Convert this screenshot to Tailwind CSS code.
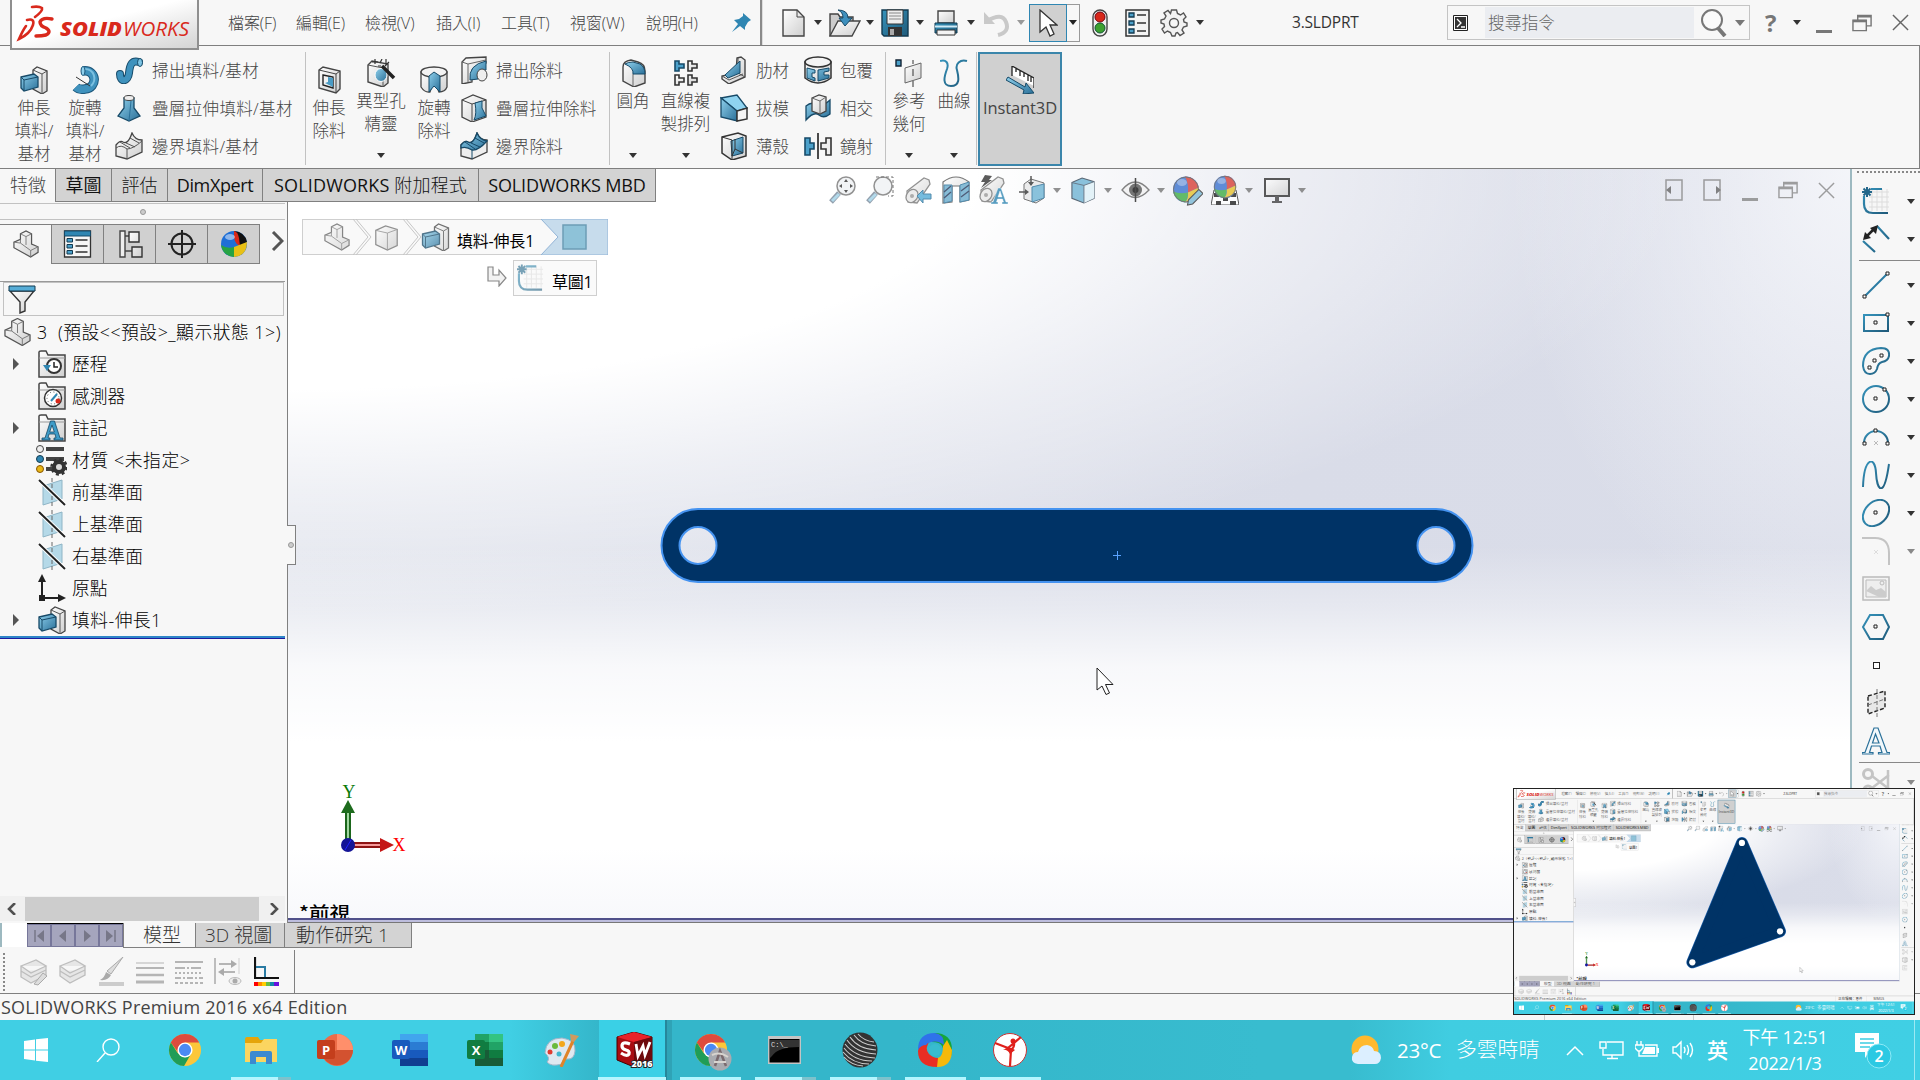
<!DOCTYPE html>
<html lang="zh-Hant">
<head>
<meta charset="utf-8">
<title>SOLIDWORKS</title>
<script src="https://cdn.jsdelivr.net/npm/@tailwindcss/browser@4"></script>
</head>
<body class="h-[1080px] w-[1920px] overflow-hidden">
<svg width="0" height="0" class="absolute">
<defs>
<linearGradient id="gb" x1="0" y1="0" x2="1" y2="1"><stop offset="0" stop-color="#8fd0ec"/><stop offset="1" stop-color="#2a7099"/></linearGradient>
<linearGradient id="gw" x1="0" y1="0" x2="1" y2="1"><stop offset="0" stop-color="#fff"/><stop offset="1" stop-color="#cfcfcf"/></linearGradient>
<linearGradient id="gs" x1="0" y1="0" x2="1" y2="1" ><stop offset="0" stop-color="#3593bb"/><stop offset="1" stop-color="#1f5a7a"/></linearGradient>
<symbol id="extrude" viewBox="0 0 28 28"><path d="M13 4 17 1 27 5V25L22 28 13 23Z" fill="url(#gw)" stroke="#444" stroke-width="1.3"/><path d="M13 4 22 8V28M22 8 27 5" fill="none" stroke="#555"/><path d="M1 11 14 8 18 11V21L4 25 1 22Z" fill="url(#gb)" stroke="#174a68" stroke-width="1.3"/><path d="M1 11 4 14 18 11M4 14V25" fill="none" stroke="#174a68"/></symbol>
<symbol id="revolve" viewBox="0 0 28 28"><path d="M12 5C26 3 27 22 14 23Q8 24 5 21" fill="none" stroke="#1b567a" stroke-width="9.500"/><path d="M12 5C26 3 27 22 14 23Q8 24 5 21" fill="none" stroke="#3f92bd" stroke-width="7.500"/><path d="M12 3C24 2 26 14 20 20" fill="none" stroke="#7cc0e0" stroke-width="2"/><ellipse cx="12" cy="5" rx="2" ry="4.500" fill="#8fd0ec" stroke="#1b567a"/><path d="M5 11 19 20" stroke="#333" stroke-width="1"/></symbol>
<symbol id="sweep" viewBox="0 0 28 28"><path d="M5 18C5 27 13 26 14 17S17 4 24 6" fill="none" stroke="#174a68" stroke-width="8" stroke-linecap="round"/><path d="M5 18C5 27 13 26 14 17S17 4 24 6" fill="none" stroke="#3f92bd" stroke-width="6" stroke-linecap="round"/><ellipse cx="25" cy="6.500" rx="2.500" ry="4" fill="#7cc4e4" stroke="#174a68"/></symbol>
<symbol id="loft" viewBox="0 0 28 28"><path d="M9 4V14L3 22 14 27 25 22 19 14V4Z" fill="url(#gb)" stroke="#174a68" stroke-width="1.300"/><path d="M14 27 16 7" stroke="#2a7099"/><ellipse cx="14" cy="4" rx="5" ry="2.500" fill="#eee" stroke="#444"/></symbol>
<symbol id="bound" viewBox="0 0 28 28"><path d="M1 13Q5 8 8 10Q13 13 17 1Q20 8 27 8V20L12 27 1 24Z" fill="url(#gw)" stroke="#444" stroke-width="1.300"/><path d="M1 16Q6 12 12 17V27M12 17Q18 17 27 9M5 10 15 16M11 11 20 15M15 6 24 11" fill="none" stroke="#555"/></symbol>
<symbol id="boundb" viewBox="0 0 28 28"><path d="M1 13Q5 8 8 10Q13 13 17 1Q20 8 27 8V20L12 27 1 24Z" fill="#eee" stroke="#444" stroke-width="1.300"/><path d="M1 13Q5 8 8 10Q13 13 17 1Q20 8 27 9Q18 19 12 18 6 14 1 16Z" fill="url(#gb)" stroke="#174a68" stroke-width="1.300"/><path d="M12 18V27M5 10 15 17M11 11 20 15M15 6 24 11" fill="none" stroke="#174a68"/></symbol>
<symbol id="excut" viewBox="0 0 28 28"><path d="M4 4 8 1 25 5V23L21 27 4 22Z" fill="url(#gw)" stroke="#444" stroke-width="1.400"/><path d="M4 4 21 8V27M21 8 25 5" fill="none" stroke="#444"/><path d="M8 9 18 11V22L8 19Z" fill="#f2f2f2" stroke="#222" stroke-width="1.400"/><path d="M10 17 13 16V11L18 12V21Z" fill="#4a9bc4"/></symbol>
<symbol id="hole" viewBox="0 0 30 28"><path d="M2 6 6 2 22 5V24L17 28 2 23Z" fill="url(#gw)" stroke="#444" stroke-width="1.400"/><path d="M2 6 17 9V28" fill="none" stroke="#555"/><ellipse cx="15" cy="16" rx="6" ry="6.500" fill="url(#gb)" stroke="#fff"/><path d="M16 7 28 19" stroke="#222" stroke-width="3.500"/><path d="M9 0V5M6 3H12M16 0 14 4M20 0V6M23 3 19 7M12 7H15" stroke="#333" stroke-width="1.200"/></symbol>
<symbol id="revcut" viewBox="0 0 28 28"><path d="M1 6V21Q5 27 10 26L14 14 19 26Q25 26 27 21V6Z" fill="url(#gw)" stroke="#444" stroke-width="1.300"/><ellipse cx="14" cy="6" rx="13" ry="5" fill="#f3f3f3" stroke="#444" stroke-width="1.300"/><path d="M14 6 9 10V26L14 20 20 26V10Z" fill="url(#gb)" stroke="#174a68"/></symbol>
<symbol id="swcut" viewBox="0 0 28 28"><path d="M2 6 6 2 26 1V7L12 14V26L2 28Z" fill="url(#gw)" stroke="#444" stroke-width="1.300"/><path d="M2 6 8 8 26 4M8 8V26" fill="none" stroke="#666"/><path d="M10 24Q8 9 26 5V14Q19 14 18 23Z" fill="url(#gb)" stroke="#174a68"/><ellipse cx="22" cy="19" rx="5" ry="6" fill="#eee" stroke="#444"/></symbol>
<symbol id="lofcut" viewBox="0 0 28 28"><path d="M2 6 13 1 26 6V23L12 28 2 23Z" fill="url(#gw)" stroke="#444" stroke-width="1.300"/><path d="M2 6 12 10V28M12 10 26 6" fill="none" stroke="#444"/><path d="M15 9 22 7V14L26 22 14 26Q17 20 15 9Z" fill="url(#gb)" stroke="#174a68"/></symbol>
<symbol id="fillet" viewBox="0 0 28 28"><path d="M4 8Q4 2 12 1L19 3Q26 5 26 12V24L15 28 4 22Z" fill="url(#gw)" stroke="#444" stroke-width="1.400"/><path d="M14 15V27" fill="none" stroke="#666"/><path d="M6 5Q9 3 14 3L21 5Q26 8 26 15H14Q15 9 6 5Z" fill="url(#gb)" stroke="#174a68"/></symbol>
<symbol id="pattern" viewBox="0 0 28 28"><g fill="url(#gw)" stroke="#333" stroke-width="1.600"><path d="M16 2H20V5H25V9H20V12H16Z"/><path d="M3 16H7V19H12V23H7V26H3ZM16 16H20V19H25V23H20V26H16Z"/></g><path d="M3 2H7V5H12V9H7V12H3Z" fill="#4ba0ca" stroke="#174a68" stroke-width="1.600"/></symbol>
<symbol id="rib" viewBox="0 0 28 28"><path d="M17 2 21 1 25 4V21L9 28 2 23V20L16 17Z" fill="url(#gw)" stroke="#444" stroke-width="1.400"/><path d="M18 2V17L25 21M2 20 9 24 23 18" fill="none" stroke="#555"/><path d="M20 5V17L8 22 5 19Z" fill="url(#gb)" stroke="#174a68"/></symbol>
<symbol id="draft" viewBox="0 0 28 28"><path d="M1 4 17 1 27 14 17 17Z" fill="#8fd3f0" stroke="#174a68" stroke-width="1.300"/><path d="M1 4 17 17V27L1 23Z" fill="url(#gb)" stroke="#174a68" stroke-width="1.300"/><path d="M17 17 27 14V25L17 27Z" fill="#f4f4f4" stroke="#333" stroke-width="1.500"/></symbol>
<symbol id="shell" viewBox="0 0 28 28"><path d="M2 5 18 1 26 4V24L12 28 2 21Z" fill="url(#gw)" stroke="#333" stroke-width="1.500"/><path d="M11 9 23 5V21L12 24Z" fill="url(#gb)" stroke="#174a68"/><path d="M2 5 12 8V28M15 7V17L12 24M15 17 23 21" fill="none" stroke="#333"/></symbol>
<symbol id="wrap" viewBox="0 0 28 28"><path d="M1 6V22Q14 32 27 22V6Z" fill="url(#gw)" stroke="#333" stroke-width="1.500"/><ellipse cx="14" cy="6" rx="13" ry="5" fill="#f4f4f4" stroke="#333" stroke-width="1.500"/><path d="M3 12 11 14V17H8V21L11 22V25L3 22ZM25 12 14 14V25L25 22V19H20V16L25 15Z" fill="url(#gb)" stroke="#174a68"/></symbol>
<symbol id="intersect" viewBox="0 0 28 28"><path d="M2 12Q8 7 12 11T26 6V20Q20 25 15 21T2 26Z" fill="url(#gb)" stroke="#174a68" stroke-width="1.300"/><path d="M8 4 15 1 22 3V17L16 20 8 17Z" fill="url(#gw)" stroke="#444" stroke-width="1.300"/><path d="M8 4 16 7 22 3M16 7V20" fill="none" stroke="#666"/></symbol>
<symbol id="mirror" viewBox="0 0 28 28"><path d="M1 6H6V11H10V17H6V23H1Z" fill="#4ba0ca" stroke="#174a68" stroke-width="1.600"/><path d="M27 6H22V11H17V17H22V23H27Z" fill="#eee" stroke="#333" stroke-width="1.600"/><path d="M14 1V27" stroke="#111" stroke-width="1.500"/></symbol>
<symbol id="refgeo" viewBox="0 0 28 28"><path d="M1 1H6V7H1Z" fill="#4ba0ca" stroke="#123" stroke-width="1.400"/><path d="M10 9 26 4V19L10 24Z" fill="url(#gw)" stroke="#666"/><path d="M18 1V5M18 10V17M18 22V28" stroke="#333"/></symbol>
<symbol id="curve" viewBox="0 0 28 28"><path d="M0 2C6 0 9 4 7 10C4 18 2 27 11 27S19 19 17 11C15 5 20 0 27 2" fill="none" stroke="url(#gs)" stroke-width="2"/></symbol>
<symbol id="instant" viewBox="0 0 28 28"><path d="M6 0 28 12V20L6 9Z" fill="#fff"/><path d="M6 10V0L28 12V22M10 2V6M14 5V10M18 7V11M22 9V15M25 11V16" fill="none" stroke="#222" stroke-width="1.300"/><path d="M2 11 19 21 20 17 28 27 17 28 18 24 0 14Z" fill="url(#gb)" stroke="#174a68"/></symbol>
<symbol id="part" viewBox="0 0 28 28"><path d="M8 3 14 0 20 3V14L27 17V23L19 28 1 18V12L8 9Z" fill="url(#gw)" stroke="#555" stroke-width="1.300"/><path d="M8 3 14 6 20 3M14 6V15M8 9V13L19 21 27 17M19 21V28M1 12 8 13" fill="none" stroke="#777"/></symbol>
<symbol id="cube" viewBox="0 0 28 28"><path d="M2 6 13 1 26 5V23L15 28 2 22Z" fill="url(#gw)" stroke="#777" stroke-width="1.400"/><path d="M2 6 15 9 26 5M15 9V28" fill="none" stroke="#888"/></symbol>
<symbol id="sketch" viewBox="0 0 28 28"><path d="M7 5H27M7 10H27M7 15H27M7 20H27M10 2V24M15 2V24M20 2V24M25 2V24" stroke="#ddd"/><path d="M9 2H20M2 9V17Q2 26 11 26H26" fill="none" stroke="url(#gs)" stroke-width="2.200"/><path d="M5 0V10M0 5H10M1.500 1.500 8.500 8.500M8.500 1.500 1.500 8.500" stroke="#23678a" stroke-width="2"/></symbol>
<symbol id="folder" viewBox="0 0 28 28"><path d="M1 27V2Q1 1 3 1H8L10 5H27V27Z" fill="url(#gw)" stroke="#444" stroke-width="1.500"/><path d="M1 8H27" stroke="#999"/></symbol>
<symbol id="plane" viewBox="0 0 28 28"><path d="M5 8 24 2V21L5 27Z" fill="#b5d9e8" stroke="#8fb5c6"/><path d="M14 0V28" stroke="#666" stroke-dasharray="4 2"/><path d="M1 2 27 27" stroke="#fff" stroke-width="4"/><path d="M1 2 27 27" stroke="#222" stroke-width="2"/></symbol>
<symbol id="mag" viewBox="0 0 28 28"><path d="M2 26 10 17" stroke="#789" stroke-width="5"/><path d="M3 25 10 18" stroke="#9fd0e6" stroke-width="3"/><circle cx="17" cy="10" r="9" fill="#f0f2f4" stroke="#777" stroke-width="1.500"/></symbol>
<symbol id="scope" viewBox="0 0 28 28"><path d="M3 15 20 2 25 4 26 8 13 27 4 26Z" fill="url(#gw)" stroke="#777" stroke-width="1.300"/><ellipse cx="8" cy="20" rx="5.500" ry="7" transform="rotate(35 8 20)" fill="#e8e8e8" stroke="#777" stroke-width="1.300"/><circle cx="8" cy="20" r="2" fill="#999"/></symbol>
<symbol id="ball" viewBox="0 0 28 28"><circle cx="14" cy="14" r="13" fill="#3b73d0"/><path d="M13 1Q24 1 27 12L16 17Q17 8 13 1Z" fill="#d84038"/><path d="M1 16Q8 19 16 17Q16 24 13 27 3 25 1 16Z" fill="#3fae45"/><path d="M16 17 27 12Q28 24 13 27Q17 23 16 17Z" fill="#e8c22e"/><circle cx="14" cy="14" r="12.500" fill="none" stroke="#555"/><ellipse cx="10" cy="7" rx="5" ry="3.500" fill="#fff" opacity=".35"/></symbol>
<symbol id="restore" viewBox="0 0 22 18"><path d="M6 6V1H20V12H15" fill="none" stroke="currentColor" stroke-width="1.500"/><path d="M6 2H20" stroke="currentColor" stroke-width="2.500"/><path d="M1 6H15V17H1Z" fill="none" stroke="currentColor" stroke-width="1.500"/><path d="M1 7H15" stroke="currentColor" stroke-width="2.500"/></symbol>
<symbol id="close" viewBox="0 0 18 18"><path d="M1 1 17 17M17 1 1 17" stroke="currentColor" stroke-width="1.500"/></symbol>
<symbol id="chrome" viewBox="0 0 36 36"><circle cx="18" cy="18" r="17" fill="#fbc73a"/><path d="M3 10A17 17 0 0 1 33 10L18 10 11 21Z" fill="#dd4b3e"/><path d="M3 10A17 17 0 0 0 17 35L25 21 18 26 10 21Z" fill="#1f9d57"/><circle cx="18" cy="18" r="8" fill="#fff"/><circle cx="18" cy="18" r="6.500" fill="#4a8af4"/></symbol>
</defs></svg>

<div id="stage" class="relative h-[1080px] w-[1920px] overflow-hidden bg-[#f7f7f7]">
<div id="screen" class="flex h-[1080px] w-[1920px] flex-col overflow-hidden bg-[#f7f7f7] font-['Open_Sans','Noto_Sans_CJK_TC',sans-serif] text-[16.500px] text-[#444]">

<!-- title bar -->
<header class="relative flex h-[46px] shrink-0 items-center border-b border-[#7f7f7f]">
  <div class="absolute top-0 left-[10px] z-10 h-[50px] w-[189px] border-2 border-t-0 border-[#8f8f8f] bg-gradient-to-br from-white from-45% to-[#d4d4d4]">
    <svg class="h-[48px] w-[185px]" viewBox="12 0 185 48"><g fill="none" stroke="#d9291c" stroke-linecap="round"><path d="M32 7Q39 6 42 8Q43 11 35 17" stroke-width="2.600"/><path d="M27 20Q35 18 33 25Q30 34 19 39Q23 30 26 26" stroke-width="2.600"/><path d="M52 19Q42 17 40 22Q40 26 46 28Q52 32 46 35 42 36 36 36" stroke-width="3.400"/></g><text x="60" y="36" font-family="'Open Sans'" font-style="italic" font-size="19.500" font-weight="800" fill="#d9291c" textLength="62" lengthAdjust="spacingAndGlyphs">SOLID</text><text x="123" y="36" font-family="'Open Sans'" font-style="italic" font-size="19.500" fill="#d9291c" textLength="66" lengthAdjust="spacingAndGlyphs">WORKS</text></svg>
  </div>
  <nav class="mt-px ml-[228px] flex text-[16px] font-light tracking-[-0.100px] whitespace-nowrap">
    <span class="w-[68px]">檔案(F)</span><span class="w-[69px]">編輯(E)</span><span class="w-[71px]">檢視(V)</span><span class="w-[65px]">插入(I)</span><span class="w-[69px]">工具(T)</span><span class="w-[76px]">視窗(W)</span><span class="w-[85px]">說明(H)</span>
  </nav>
  <svg class="h-5 w-5" viewBox="0 0 20 20"><path d="M12 0 20 7 17 9 14 14V17L9 13 1 19 7 11 3 7 8 6 12 3Z" fill="#2f86b2"/></svg>
  <div class="ml-[9px] h-[45px] w-[3px] border-l-2 border-[#8a8a8a] bg-[#ddd]"></div>
  <div class="flex items-center">
    <div class="ml-[19px] flex w-[47px] items-center gap-[9px]"><svg class="h-7 w-[23px]" viewBox="0 0 23 28"><path d="M1 1H15L22 8V27H1Z" fill="url(#gw)" stroke="#444" stroke-width="1.400"/><path d="M15 1V8H22" fill="none" stroke="#444"/></svg><i class="block border-x-4 border-t-[5px] border-x-transparent border-t-[#333]"></i></div>
    <div class="flex w-[52px] items-center gap-[5px]"><svg class="h-7 w-[32px]" viewBox="0 0 32 28"><path d="M1 27V5H9L11 8H24V13" fill="#ccc" stroke="#444" stroke-width="1.400"/><path d="M1 27 9 12H31L23 27Z" fill="url(#gw)" stroke="#444" stroke-width="1.400"/><path d="M9 1Q19 1 19 9H23L16 17 10 9H14Q14 3 9 1Z" fill="#3d8fbd" stroke="#174a68"/></svg><i class="block border-x-4 border-t-[5px] border-x-transparent border-t-[#333]"></i></div>
    <div class="flex w-[53px] items-center gap-[7px]"><svg class="h-7 w-7" viewBox="0 0 28 28"><path d="M1 1H27V27H3L1 25Z" fill="url(#gs)" stroke="#123a50" stroke-width="1.400"/><path d="M6 1H22V15H6Z" fill="#eee" stroke="#333"/><path d="M8 4H20M8 7H20M8 10H20" stroke="#888"/><path d="M7 18H21V27H7Z" fill="#333"/><path d="M9 20H13V26H9Z" fill="#aaa"/></svg><i class="block border-x-4 border-t-[5px] border-x-transparent border-t-[#333]"></i></div>
    <div class="flex w-[49px] items-center gap-[9px]"><svg class="h-7 w-[24px]" viewBox="0 0 24 28"><path d="M4 2H20V14H4Z" fill="url(#gw)" stroke="#444" stroke-width="1.400"/><path d="M1 14H23V24H1Z" fill="url(#gs)" stroke="#123a50"/><path d="M1 17.500H23" stroke="#cfeaf6" stroke-width="2"/><path d="M3 21H21V26H3Z" fill="#f3f3f3" stroke="#333"/></svg><i class="block border-x-4 border-t-[5px] border-x-transparent border-t-[#333]"></i></div>
    <div class="flex w-[44px] items-center gap-[8px]"><svg class="h-7 w-[26px]" viewBox="0 0 26 28"><path d="M4 12Q19 3 23 13T15 26" fill="none" stroke="#c9c9c9" stroke-width="4"/><path d="M1 3V15H12Z" fill="#c9c9c9"/></svg><i class="block border-x-4 border-t-[5px] border-x-transparent border-t-[#999]"></i></div>
    <div class="ml-[2px] flex h-[38px] w-[51px] items-center border border-[#999]"><div class="-ml-px grid h-[38px] w-[38px] place-items-center border border-[#2f86b2] bg-[#d0d0d0]"><svg class="h-7 w-5" viewBox="0 0 20 28"><path d="M2 1V23L8 18 12 27 16 25 12 16H19Z" fill="#fff" stroke="#333" stroke-width="1.300"/></svg></div><i class="ml-[2px] block border-x-4 border-t-[5px] border-x-transparent border-t-[#222]"></i></div>
    <svg class="ml-[12px] h-7 w-[16px]" viewBox="0 0 16 28"><rect x="1" y="1" width="14" height="26" rx="7" fill="#eee" stroke="#444" stroke-width="1.400"/><circle cx="8" cy="8" r="5" fill="#d8281a" stroke="#701"/><circle cx="8" cy="19" r="5" fill="#3da12f" stroke="#153"/></svg>
    <svg class="ml-[17px] h-7 w-[25px]" viewBox="0 0 25 28"><path d="M1 1H24V27H1Z" fill="#f4f4f4" stroke="#333" stroke-width="1.500"/><g fill="#4ba0ca" stroke="#123a50" stroke-width="1.300"><path d="M4 4H9V8H4ZM4 12H9V16H4ZM4 20H9V24H4Z"/></g><path d="M12 6H21M12 14H21M12 22H21" stroke="#333" stroke-width="1.400"/></svg>
    <svg class="ml-[10px] h-[28px] w-[28px]" viewBox="-14 -14 28 28"><path d="M-2.500-13H2.500L3.500-9.500 6.500-8 9.500-10 12-6 9.500-3.500 10-1 13 0V3L9.500 4 8 7 10 10 6 12.500 3.500 9.500 2 10 1 13H-2L-3.500 9.500-6.500 8-9.500 10-12 6-9.500 3.500-10 1-13 0V-3L-9.500-4-8-7-10-10-6-12.500-3.500-9.500Z" fill="#f2f2f2" stroke="#555" stroke-width="1.400"/><circle r="4.500" fill="#f7f7f7" stroke="#555" stroke-width="1.400"/></svg>
    <i class="ml-[8px] block border-x-4 border-t-[5px] border-x-transparent border-t-[#333]"></i>
  </div>
  <span data-title class="mt-px ml-[88px] w-[155px] text-[15.500px] tracking-[-0.200px] text-[#333]">3.SLDPRT</span>
  <div class="flex h-[35px] w-[303px] items-center border border-[#c4c4c4]">
    <svg class="ml-[5px] h-4 w-[15px]" viewBox="0 0 15 16"><path d="M.5.500H14.500V15.500H.5Z" fill="#fff" stroke="#222"/><path d="M2 2H13V14H2Z" fill="#333"/><path d="M4 4 8 8 4 12M8 12H12" fill="none" stroke="#fff" stroke-width="1.300"/></svg>
    <div class="ml-[17px] flex h-[31px] w-[209px] items-center bg-[#ebedf1] pl-[3px] text-[16.800px] font-light text-[#666]">搜尋指令</div>
    <svg class="ml-[6px] h-7 w-7" viewBox="0 0 28 28"><circle cx="12" cy="11" r="10" fill="#fafafa" stroke="#777" stroke-width="2"/><path d="M18 19 25 27" stroke="#777" stroke-width="4"/></svg>
    <i class="ml-[7px] block border-x-[5px] border-t-[6px] border-x-transparent border-t-[#777]"></i>
  </div>
  <b class="ml-[15px] w-[14px] text-[24px] text-[#777]">?</b><i class="ml-[14px] block border-x-4 border-t-[5px] border-x-transparent border-t-[#333]"></i>
  <div class="mt-[18px] ml-[15px] h-[3px] w-[16px] bg-[#777]"></div>
  <svg class="ml-[20px] h-[18px] w-[21px] text-[#777]"><use href="#restore"/></svg>
  <svg class="ml-[19px] h-[17px] w-[17px] text-[#666]"><use href="#close"/></svg>
</header>

<!-- ribbon -->
<section class="flex h-[123px] shrink-0 border-r border-b border-[#7f7f7f] text-center leading-[23px] font-light">
  <div class="ml-[9px] flex w-[50px] flex-col items-center pt-[20px]"><svg class="h-7 w-7"><use href="#extrude"/></svg><p class="mt-[2px]">伸長<br>填料/<br>基材</p></div>
  <div class="ml-px flex w-[50px] flex-col items-center pt-[20px]"><svg class="h-7 w-7"><use href="#revolve"/></svg><p class="mt-[2px]">旋轉<br>填料/<br>基材</p></div>
  <div class="ml-[5px] w-[190px] pt-[5px] tracking-[0.350px] whitespace-nowrap">
    <div class="flex h-[38px] items-center gap-[9px]"><svg class="h-7 w-7"><use href="#sweep"/></svg>掃出填料/基材</div>
    <div class="flex h-[38px] items-center gap-[9px]"><svg class="h-7 w-7"><use href="#loft"/></svg>疊層拉伸填料/基材</div>
    <div class="flex h-[38px] items-center gap-[9px]"><svg class="h-7 w-7"><use href="#bound"/></svg>邊界填料/基材</div>
  </div>
  <div class="mt-[6px] h-[113px] w-px bg-[#c2c2c2]"></div>
  <div class="flex w-[46px] flex-col items-center pt-[20px]"><svg class="h-7 w-7"><use href="#excut"/></svg><p class="mt-[2px]">伸長<br>除料</p></div>
  <div class="flex w-[58px] flex-col items-center pt-[13px]"><svg class="h-7 w-[30px]"><use href="#hole"/></svg><p class="mt-[2px]">異型孔<br>精靈</p><i class="mt-[18px] block border-x-4 border-t-[5px] border-x-transparent border-t-[#333]"></i></div>
  <div class="flex w-[48px] flex-col items-center pt-[20px]"><svg class="h-7 w-7"><use href="#revcut"/></svg><p class="mt-[2px]">旋轉<br>除料</p></div>
  <div class="ml-[2px] w-[149px] pt-[5px] tracking-[0.250px] whitespace-nowrap">
    <div class="flex h-[38px] items-center gap-[8px]"><svg class="h-7 w-7"><use href="#swcut"/></svg>掃出除料</div>
    <div class="flex h-[38px] items-center gap-[8px]"><svg class="h-7 w-7"><use href="#lofcut"/></svg>疊層拉伸除料</div>
    <div class="flex h-[38px] items-center gap-[8px]"><svg class="h-7 w-7"><use href="#boundb"/></svg>邊界除料</div>
  </div>
  <div class="mt-[6px] h-[113px] w-px bg-[#c2c2c2]"></div>
  <div class="flex w-[46px] flex-col items-center pt-[13px]"><svg class="h-7 w-7"><use href="#fillet"/></svg><p class="mt-[2px]">圓角</p><i class="mt-[41px] block border-x-4 border-t-[5px] border-x-transparent border-t-[#333]"></i></div>
  <div class="flex w-[59px] flex-col items-center pt-[13px]"><svg class="h-7 w-7"><use href="#pattern"/></svg><p class="mt-[2px]">直線複<br>製排列</p><i class="mt-[18px] block border-x-4 border-t-[5px] border-x-transparent border-t-[#333]"></i></div>
  <div class="ml-[5px] w-[84px] pt-[5px] whitespace-nowrap">
    <div class="flex h-[38px] items-center gap-[8px]"><svg class="h-7 w-7"><use href="#rib"/></svg>肋材</div>
    <div class="flex h-[38px] items-center gap-[8px]"><svg class="h-7 w-7"><use href="#draft"/></svg>拔模</div>
    <div class="flex h-[38px] items-center gap-[8px]"><svg class="h-7 w-7"><use href="#shell"/></svg>薄殼</div>
  </div>
  <div class="w-[81px] pt-[5px] whitespace-nowrap">
    <div class="flex h-[38px] items-center gap-[8px]"><svg class="h-7 w-7"><use href="#wrap"/></svg>包覆</div>
    <div class="flex h-[38px] items-center gap-[8px]"><svg class="h-7 w-7"><use href="#intersect"/></svg>相交</div>
    <div class="flex h-[38px] items-center gap-[8px]"><svg class="h-7 w-7"><use href="#mirror"/></svg>鏡射</div>
  </div>
  <div class="mt-[6px] h-[113px] w-px bg-[#c2c2c2]"></div>
  <div class="flex w-[46px] flex-col items-center pt-[13px]"><svg class="h-7 w-7"><use href="#refgeo"/></svg><p class="mt-[2px]">參考<br>幾何</p><i class="mt-[18px] block border-x-4 border-t-[5px] border-x-transparent border-t-[#333]"></i></div>
  <div class="flex w-[44px] flex-col items-center pt-[13px]"><svg class="h-7 w-7"><use href="#curve"/></svg><p class="mt-[2px]">曲線</p><i class="mt-[41px] block border-x-4 border-t-[5px] border-x-transparent border-t-[#333]"></i></div>
  <div class="mt-[6px] h-[113px] w-px bg-[#c2c2c2]"></div>
  <div class="mt-[6px] ml-px flex h-[114px] w-[84px] flex-col items-center border-2 border-[#3b86ab] bg-[#d0d0d0] pt-[12px]"><svg class="h-7 w-7"><use href="#instant"/></svg><p class="mt-[2px] font-normal tracking-[-0.100px]">Instant3D</p></div>
</section>

<main class="relative flex h-[754px] shrink-0">
  <!-- command manager tabs -->
  <div class="absolute top-0 left-0 z-10 flex h-[33px] w-[656px] text-[18px] leading-[33px] text-[#111]">
    <span class="w-[55px] pl-[10px] font-light text-[#444]">特徵</span>
    <span class="w-[57px] border border-t-0 border-[#808080] bg-[#d3d3d3] text-center">草圖</span>
    <span class="w-[56px] border-r border-b border-[#808080] bg-[#d3d3d3] text-center font-light">評估</span>
    <span class="w-[95px] border-r border-b border-[#808080] bg-[#d3d3d3] text-center tracking-[-0.400px]">DimXpert</span>
    <span class="w-[216px] border-r border-b border-[#808080] bg-[#d3d3d3] text-center tracking-[0.150px] whitespace-nowrap">SOLIDWORKS <span class="font-light">附加程式</span></span>
    <span class="w-[177px] border-r border-b border-[#808080] bg-[#d3d3d3] text-center tracking-[-0.150px] whitespace-nowrap">SOLIDWORKS MBD</span>
  </div>

  <!-- feature tree panel -->
  <aside class="relative flex w-[288px] flex-col border-r border-[#808080] pt-[34px]">
    <div class="mr-[2px] grid h-[17px] place-items-center border-y border-[#c2c2c2]"><div class="h-[6px] w-[6px] rounded-full border border-[#999] bg-[#ccc]"></div></div>
    <div class="mt-[4px] flex h-[40px] w-[285px]">
      <div class="w-[51px] border-t border-[#808080] pt-[5px] pl-[13px]"><svg class="h-7 w-[26px]"><use href="#part"/></svg></div>
      <div class="grid w-[53px] place-items-center border border-[#808080] bg-[#d0d0d0]"><svg class="h-7 w-[29px]" viewBox="0 0 28 28"><path d="M1 1H27V27H1Z" fill="#f6f6f6" stroke="#333" stroke-width="1.300"/><path d="M1 1H27V6H1Z" fill="#2f86b2" stroke="#174a68"/><g fill="#4ba0ca" stroke="#123a50"><path d="M3.500 8.500H9V12H3.500ZM3.500 14.500H9V18H3.500ZM3.500 20.500H9V24H3.500Z"/></g><path d="M12 10H24M12 16H24M12 22H24" stroke="#333" stroke-width="1.300"/></svg></div>
      <div class="grid w-[52px] place-items-center border border-l-0 border-[#808080] bg-[#d0d0d0]"><svg class="h-7 w-7" viewBox="0 0 28 28"><path d="M4 1H9V27H4ZM9 6H15M9 21H17" fill="#eee" stroke="#444" stroke-width="1.400"/><path d="M13 2H23V12H13ZM16 17H26V27H16Z" fill="url(#gw)" stroke="#333" stroke-width="1.400"/></svg></div>
      <div class="grid w-[52px] place-items-center border border-l-0 border-[#808080] bg-[#d0d0d0]"><svg class="h-7 w-7" viewBox="0 0 28 28"><g stroke="#222" stroke-width="2" fill="none"><circle cx="14" cy="14" r="10.500"/><path d="M14 0V28M0 14H28"/></g></svg></div>
      <div class="grid w-[52px] place-items-center border border-l-0 border-[#808080] bg-[#d0d0d0]"><svg class="h-7 w-7" viewBox="0 0 28 28"><circle cx="14" cy="14" r="13" fill="#1f6fd6"/><path d="M14 1Q25 2 27 12L20 16Q13 10 14 1Z" fill="#111"/><path d="M14 1Q18 2 19 8L20 16Q13 14 14 1Z" fill="#d8281a"/><path d="M1 15Q7 19 14 17V27Q3 26 1 15Z" fill="#27a343"/><path d="M14 17 27 12Q27 26 14 27Z" fill="#e8c016"/><ellipse cx="10" cy="7" rx="5" ry="3" fill="#fff" opacity=".5"/></svg></div>
      <svg class="mt-[7px] ml-[11px] h-[20px] w-[13px] shrink-0" viewBox="0 0 13 20"><path d="M2 1 11 10 2 19" fill="none" stroke="#555" stroke-width="3"/></svg>
    </div>
    <div class="mt-[17px] mr-[2px] border-t border-[#999]"></div>
    <div class="mr-[3px] ml-[3px] h-[34px] border border-[#c2c2c2] pt-[2px] pl-[4px]"><svg class="h-[29px] w-[28px]" viewBox="0 0 28 29"><path d="M2 6H26L17 17V26L12 28V17Z" fill="url(#gw)" stroke="#333" stroke-width="1.400"/><path d="M1 1H27V6H1Z" fill="#55acd6" stroke="#123a50"/></svg></div>
    <div class="flex flex-col text-[17.800px] leading-[32px] font-light text-black whitespace-nowrap">
      <div class="flex h-[32px] w-[285px] items-center overflow-hidden pl-[4px]"><svg class="h-7 w-[27px] shrink-0"><use href="#part"/></svg><span data-root class="ml-[6px] tracking-[0.500px] whitespace-pre">3  (預設&lt;&lt;預設&gt;_顯示狀態 1&gt;)</span></div>
      <div class="flex h-[32px] items-center"><i class="ml-[13px] block border-y-[6px] border-l-[6px] border-y-transparent border-l-[#555]"></i><svg class="mr-[6px] ml-[19px] h-7 w-7" viewBox="0 0 28 28"><use href="#folder"/><circle cx="16" cy="16" r="7" fill="#fff" stroke="#333" stroke-width="2"/><path d="M16 12V17H20" fill="none" stroke="#222" stroke-width="1.500"/><path d="M5 15H13L9 21Z" fill="#2f86b2"/></svg>歷程</div>
      <div class="flex h-[32px] items-center"><svg class="mr-[6px] ml-[38px] h-7 w-7" viewBox="0 0 28 28"><use href="#folder"/><circle cx="15" cy="16" r="8.500" fill="#fff" stroke="#333" stroke-width="1.500"/><circle cx="15" cy="16" r="6" fill="none" stroke="#555" stroke-dasharray="1 2.500"/><path d="M13 19 19 12" stroke="#2f86b2" stroke-width="2"/><circle cx="20" cy="19" r="2.500" fill="#d8281a"/></svg>感測器</div>
      <div class="flex h-[32px] items-center"><i class="ml-[13px] block border-y-[6px] border-l-[6px] border-y-transparent border-l-[#555]"></i><svg class="mr-[6px] ml-[19px] h-7 w-7" viewBox="0 0 28 28"><use href="#folder"/><path d="M4 24H7L12.500 7H16.500L22 24H25V26H16V24H18L17 20H11L10 24H12V26H4ZM11.700 18H16.300L14 11Z" fill="#3f9cc8" stroke="#174a68" stroke-width=".8"/></svg>註記</div>
      <div class="flex h-[32px] items-center"><svg class="mr-[5px] ml-[36px] h-[31px] w-[31px]" viewBox="0 0 31 31"><path d="M10 4H28M10 14H28M10 24H18" stroke="#444" stroke-width="4"/><circle cx="4" cy="4" r="3.500" fill="#eee" stroke="#444"/><circle cx="4" cy="14" r="3.500" fill="#2f86b2" stroke="#123a50"/><circle cx="4" cy="24" r="3.500" fill="#e8b716" stroke="#850"/><circle cx="23" cy="22" r="5" fill="#ddd" stroke="#333" stroke-width="4"/><circle cx="23" cy="22" r="7.500" fill="none" stroke="#333" stroke-width="2.500" stroke-dasharray="3 2.900"/></svg><span class="tracking-[0.600px]">材質 &lt;未指定&gt;</span></div>
      <div class="flex h-[32px] items-center"><svg class="mr-[6px] ml-[38px] h-[30px] w-7"><use href="#plane"/></svg>前基準面</div>
      <div class="flex h-[32px] items-center"><svg class="mr-[6px] ml-[38px] h-[30px] w-7"><use href="#plane"/></svg>上基準面</div>
      <div class="flex h-[32px] items-center"><svg class="mr-[6px] ml-[38px] h-[30px] w-7"><use href="#plane"/></svg>右基準面</div>
      <div class="flex h-[32px] items-center"><svg class="mr-[6px] ml-[38px] h-7 w-7" viewBox="0 0 28 28"><path d="M4 4V24H22" fill="none" stroke="#222" stroke-width="2"/><path d="M0 8 4 0 8 8ZM20 20 28 24 20 28ZM1 21H7V27H1Z" fill="#222"/></svg>原點</div>
      <div class="flex h-[32px] items-center"><i class="ml-[13px] block border-y-[6px] border-l-[6px] border-y-transparent border-l-[#555]"></i><svg class="mr-[6px] ml-[19px] h-7 w-7"><use href="#extrude"/></svg><span class="tracking-[0.450px]">填料-伸長1</span></div>
      <div class="h-[3px] w-[285px] border-b border-[#1c1ca0] bg-[#2f86c8]"></div>
    </div>
    <div class="mt-auto mb-[2px] flex h-[25px] w-[285px] items-center bg-[#f0f0f0]">
      <svg class="ml-[7px] h-3 w-[9px]" viewBox="0 0 9 12"><path d="M8 0 2 6 8 12" fill="none" stroke="#505050" stroke-width="2.600"/></svg>
      <div class="ml-[9px] h-[24px] w-[234px] bg-[#cdcdcd]"></div>
      <svg class="ml-[11px] h-3 w-[9px]" viewBox="0 0 9 12"><path d="M1 0 7 6 1 12" fill="none" stroke="#505050" stroke-width="2.600"/></svg>
    </div>
    <div class="absolute top-[356px] left-[287px] z-10 grid h-[40px] w-[9px] place-items-center border border-l-0 border-[#808080] bg-[#f7f7f7]"><div class="h-[6px] w-[6px] rounded-full border border-[#999] bg-[#ccc]"></div></div>
  </aside>

  <!-- graphics area -->
  <section class="relative h-[754px] w-[1562px] overflow-hidden bg-[linear-gradient(180deg,transparent_50%,rgba(255,255,255,.35)_58%,rgba(255,255,255,.8)_66%,white_76%,white_90%,#f7f8fb_100%),radial-gradient(ellipse_1250px_400px_at_0_0,white_55%,rgba(255,255,255,.5)_80%,transparent_112%),radial-gradient(ellipse_340px_480px_at_100%_0,rgba(248,249,252,.85)_0%,transparent_100%),linear-gradient(90deg,#e0e3ec,#d9dce8_65%,#dadde9)]">
    <svg class="absolute inset-0 h-[754px] w-[1562px]" viewBox="288 169 1562 754">
      <g data-slot><path fill-rule="evenodd" d="M698 509H1436A36.500 36.500 0 0 1 1436 582H698A36.500 36.500 0 0 1 698 509ZM698 527A18.500 18.500 0 1 0 698 564A18.500 18.500 0 1 0 698 527ZM1436 527A18.500 18.500 0 1 0 1436 564A18.500 18.500 0 1 0 1436 527Z" fill="#003366" stroke="#4593f0" stroke-width="2"/><path d="M1113 555.500H1121M1117.500 551V560" stroke="#5aa2ff"/></g>
      <g data-tri class="hidden"><path d="M1094 259 1277 683 856 832Z" fill="#003366" stroke="#1f62ad" stroke-width="57" stroke-linejoin="round"/><path d="M1094 259 1277 683 856 832Z" fill="#003366" stroke="#003366" stroke-width="51" stroke-linejoin="round"/><circle cx="1094" cy="259" r="15" fill="#fff"/><circle cx="1277" cy="683" r="15" fill="#fff"/><circle cx="856" cy="832" r="15" fill="#fff"/></g>
      <g data-cursor><path d="M1097 668V690L1102 686 1106 694.500 1109.500 693 1105.500 684.500H1113Z" fill="#fff" stroke="#222"/></g>
      <path d="M348 840V812" stroke="#1b661b" stroke-width="6"/><path d="M348 840V812" stroke="#9fd69f" stroke-width="2"/><path d="M341 813 348 800 355 813Z" fill="#1d6b1d"/>
      <path d="M354 845H381" stroke="#8f1414" stroke-width="6"/><path d="M354 845H381" stroke="#f59a9a" stroke-width="2"/><path d="M380 838 394 845 380 852Z" fill="#c41616"/>
      <circle cx="348" cy="845" r="7" fill="#141496"/><path d="M345 850 351 840" stroke="#22f"/>
      <text x="349" y="798" text-anchor="middle" font-family="'Liberation Serif'" font-size="18" fill="#087a08">Y</text><text x="399" y="851" text-anchor="middle" font-family="'Liberation Serif'" font-size="18" fill="#f00">X</text>
      <text x="299" y="919" font-family="'Noto Sans CJK TC'" font-weight="500" font-size="17.500" textLength="51" lengthAdjust="spacingAndGlyphs" fill="#000">*前視</text>
    </svg>
    <div class="absolute inset-x-0 bottom-0 h-[5px] border-t-2 border-b border-t-[#50508a] border-b-[#777] bg-[#bdbddd]"></div>

    <div class="relative flex h-[42px] items-center pl-[541px] opacity-80">
      <div class="w-[37px]"><svg class="h-7 w-7" viewBox="0 0 28 28"><use href="#mag"/><path d="M17 3 19 6H15ZM17 17 19 14H15ZM10 10 13 8V12ZM24 10 21 8V12Z" fill="#333"/></svg></div>
      <div class="w-[38px]"><svg class="h-7 w-7" viewBox="0 0 28 28"><use href="#mag"/><path d="M10 1H27V20H22" fill="none" stroke="#555" stroke-dasharray="3 2"/></svg></div>
      <div class="w-[38px]"><svg class="h-7 w-7" viewBox="0 0 28 28"><use href="#scope"/><path d="M13 20 19 14V18H27V23H19V27Z" fill="#55acd6" stroke="#2a7099"/></svg></div>
      <div class="w-[36px]"><svg class="h-7 w-7" viewBox="0 0 28 28"><path d="M1 6Q14-4 27 6V24L18 26V10H10V26L1 27Z" fill="url(#gw)" stroke="#555" stroke-width="1.200"/><path d="M2 9H10V25L2 27ZM18 9 27 6V24L18 26Z" fill="#6aaccd" stroke="#2a7099"/><path d="M2 16 9 10M2 22 9 16M19 15 27 9M19 21 27 15" stroke="#235" stroke-width="1.300"/></svg></div>
      <div class="w-[41px]"><svg class="h-[30px] w-[30px]" viewBox="0 0 30 30"><use href="#scope" width="28" height="28"/><path d="M7 0 14 1 11 5H14L3 13 7 7H3Z" fill="#333"/><path d="M13 27H15L20 13H23L28 27H30V29H24V27H25.500L24.500 24H19.500L18.500 27H20V29H13ZM20 22H24L22 16Z" fill="#2f86b2" stroke="#fff" stroke-width=".4"/></svg></div>
      <div class="flex w-[52px] items-center gap-[8px]"><svg class="h-7 w-[26px]" viewBox="0 0 26 28"><path d="M5 8 12 3 25 7V22L17 27 5 23Z" fill="#e8e8e8" stroke="#555"/><path d="M13 11 25 8V22L13 26Z" fill="#6fb4d4" stroke="#2a7099"/><path d="M12 0V9M0 16H8" stroke="#333" stroke-width="1.500"/><path d="M9 6 12 10 15 6ZM6 13 10 16 6 19Z" fill="#333"/></svg><i class="block border-x-4 border-t-[5px] border-x-transparent border-t-[#777]"></i></div>
      <div class="flex w-[50px] items-center gap-[9px]"><svg class="h-7 w-[24px]" viewBox="0 0 26 28"><path d="M1 6 12 1 25 5V23L14 28 1 23Z" fill="#6fb4d4" stroke="#345" stroke-width="1.200"/><path d="M14 9 25 5V23L14 28Z" fill="#dff1f8"/><path d="M1 6 14 9 25 5M14 9V28" fill="none" stroke="#456"/></svg><i class="block border-x-4 border-t-[5px] border-x-transparent border-t-[#777]"></i></div>
      <div class="flex w-[51px] items-center gap-[7px]"><svg class="h-7 w-[29px]" viewBox="0 0 29 28"><path d="M1 14Q14-2 28 14Q14 29 1 14Z" fill="#f2f2f2" stroke="#666" stroke-width="1.300"/><circle cx="14.500" cy="14" r="6.500" fill="#555"/><circle cx="14.500" cy="14" r="3" fill="#111"/><path d="M14.500 2V26" stroke="#222" stroke-width="1.500"/></svg><i class="block border-x-4 border-t-[5px] border-x-transparent border-t-[#777]"></i></div>
      <div class="w-[39px]"><svg class="h-[31px] w-[31px]" viewBox="0 0 30 30"><use href="#ball" width="27" height="28"/><path d="M15 29 16 24 26 14 30 18 20 28Z" fill="#7bb9d6" stroke="#333"/></svg></div>
      <div class="flex w-[53px] items-center gap-[6px]"><svg class="h-[30px] w-7" viewBox="0 0 28 30"><path d="M3 15H25L28 30H0Z" fill="#fff" stroke="#333"/><path d="M3 18H8V22H3ZM12 22H17V26H12ZM20 18H25V22H20ZM5 26H10V30H5ZM19 26H25V30H19Z" fill="#222"/><use href="#ball" x="2" width="24" height="24"/></svg><i class="block border-x-4 border-t-[5px] border-x-transparent border-t-[#777]"></i></div>
      <div class="flex items-center gap-[8px]"><svg class="h-7 w-[26px]" viewBox="0 0 26 28"><path d="M1 3H25V20H1Z" fill="url(#gw)" stroke="#333" stroke-width="2"/><path d="M11 20H15V25H18V27H8V25H11Z" fill="#444"/></svg><i class="block border-x-4 border-t-[5px] border-x-transparent border-t-[#777]"></i></div>
      <div class="ml-[359px] flex items-center text-[#888]">
        <svg class="h-[22px] w-[18px]" viewBox="0 0 18 22"><path d="M1 1H17V21H1Z" fill="none" stroke="#888" stroke-width="1.500"/><path d="M6 7V15L1 11Z" fill="#666"/></svg>
        <svg class="ml-[20px] h-[22px] w-[18px]" viewBox="0 0 18 22"><path d="M1 1H17V21H1Z" fill="none" stroke="#888" stroke-width="1.500"/><path d="M13 7V15L18 11Z" fill="#666"/></svg>
        <div class="mt-[18px] ml-[21px] h-[3px] w-[16px] bg-[#888]"></div>
        <svg class="ml-[20px] h-[18px] w-[21px]"><use href="#restore"/></svg>
        <svg class="ml-[19px] h-[17px] w-[17px]"><use href="#close"/></svg>
      </div>
    </div>

    <!-- selection breadcrumbs -->
    <div class="relative mt-[8px] ml-[14px] flex h-[36px] w-[306px] items-center border border-[#cfcfcf] bg-[#f9f9f9] text-[16px] text-black">
      <svg class="absolute -top-px -left-px h-[36px] w-[306px]" viewBox="0 0 306 36"><path d="M239 0H306V36H239L256 18Z" fill="#c7dcec" stroke="#93b4d6"/><path d="M51 0 66 18 51 36M54 0 69 18 54 36M101 0 116 18 101 36M104 0 119 18 104 36" fill="none" stroke="#c6c6c6"/><path d="M261 6H284V30H261Z" fill="#8ec2d8" stroke="#6e9db5" stroke-width="1.500"/></svg>
      <svg class="relative ml-[21px] h-7 w-[26px] opacity-70"><use href="#part"/></svg>
      <svg class="relative ml-[24px] h-[27px] w-[25px] opacity-80"><use href="#cube"/></svg>
      <svg class="relative ml-[22px] h-[28px] w-[29px] opacity-75"><use href="#extrude"/></svg>
      <span class="relative mt-[8px] ml-[7px] tracking-[-0.200px]">填料-伸長1</span>
    </div>
    <div class="mt-[5px] ml-[199px] flex items-center">
      <svg class="mb-[3px] h-[21px] w-[20px]" viewBox="0 0 20 21"><path d="M1 1H6V9H12V4L19 12 12 20V15H1Z" fill="#f2f2f2" stroke="#888" stroke-width="1.200"/></svg>
      <div class="ml-[6px] flex h-[36px] w-[84px] items-center border border-[#cfcfcf] bg-[#fafafa] text-[16px] text-black"><svg class="ml-[3px] h-7 w-[27px] opacity-60"><use href="#sketch"/></svg><span class="mt-[8px] ml-[8px] tracking-[-0.300px] whitespace-nowrap">草圖1</span></div>
    </div>
  </section>

  <!-- sketch toolbar -->
  <aside class="flex w-[70px] flex-col border-l-2 border-[#9db9c0] bg-[#f7f7f7] pt-[2px]">
    <div class="ml-[5px] h-[3px] shrink-0 border-t-2 border-dotted border-[#888]"></div>
    <div class="mt-[8px] flex h-[38px] shrink-0 items-center pl-[10px]"><svg class="h-7 w-7 shrink-0"><use href="#sketch"/></svg><i class="ml-[17px] block border-x-4 border-t-[5px] border-x-transparent border-t-[#333]"></i></div>
    <div class="flex h-[38px] shrink-0 items-center pl-[10px]"><svg class="h-7 w-7 shrink-0" viewBox="0 0 28 28"><path d="M15 1 27 14M1 16 13 27" stroke="url(#gs)" stroke-width="2.200"/><path d="M5 11 12 4" stroke="#222" stroke-width="2.500"/><path d="M1 15 3 7 9 13ZM16 0 8 3 14 9Z" fill="#222"/></svg><i class="ml-[17px] block border-x-4 border-t-[5px] border-x-transparent border-t-[#333]"></i></div>
    <div class="mt-[2px] mb-[5px] ml-[7px] h-px shrink-0 bg-[#888]"></div>
    <div class="flex h-[38px] shrink-0 items-center pl-[10px]"><svg class="h-7 w-7 shrink-0" viewBox="0 0 28 28"><path d="M2 26 26 2" stroke="#2a7ba3" stroke-width="2"/><path d="M1 24H4V27H1ZM24 1H27V4H24Z" fill="#fff" stroke="#222"/></svg><i class="ml-[17px] block border-x-4 border-t-[5px] border-x-transparent border-t-[#333]"></i></div>
    <div class="flex h-[38px] shrink-0 items-center pl-[10px]"><svg class="h-7 w-7 shrink-0" viewBox="0 0 28 28"><path d="M2 6H26V22H2Z" fill="none" stroke="url(#gs)" stroke-width="2"/><path d="M24 4H27V7H24ZM12 12H15V15H12Z" fill="#fff" stroke="#222"/></svg><i class="ml-[17px] block border-x-4 border-t-[5px] border-x-transparent border-t-[#333]"></i></div>
    <div class="flex h-[38px] shrink-0 items-center pl-[10px]"><svg class="h-7 w-7 shrink-0" viewBox="0 0 28 28"><path d="M1 19Q1 2 19 1Q28 1 27 9Q26 14 20 15Q16 16 15 22Q13 27 8 27 2 27 1 19Z" fill="none" stroke="url(#gs)" stroke-width="2"/><path d="M18 7H21V10H18ZM11 12H14V15H11ZM6 19H9V22H6Z" fill="#fff" stroke="#222"/></svg><i class="ml-[17px] block border-x-4 border-t-[5px] border-x-transparent border-t-[#333]"></i></div>
    <div class="flex h-[38px] shrink-0 items-center pl-[10px]"><svg class="h-7 w-7 shrink-0" viewBox="0 0 28 28"><circle cx="14" cy="14" r="13" fill="none" stroke="url(#gs)" stroke-width="2"/><path d="M12 12H15V15H12ZM21 3H24V6H21Z" fill="#fff" stroke="#222"/></svg><i class="ml-[17px] block border-x-4 border-t-[5px] border-x-transparent border-t-[#333]"></i></div>
    <div class="flex h-[38px] shrink-0 items-center pl-[10px]"><svg class="h-7 w-7 shrink-0" viewBox="0 0 28 28"><path d="M2 20A12 12 0 0 1 26 20" fill="none" stroke="url(#gs)" stroke-width="2"/><path d="M1 19H4V22H1ZM24 19H27V22H24ZM12 6H15V9H12Z" fill="#fff" stroke="#222"/><path d="M12 18 16 22M16 18 12 22" stroke="#bbb"/></svg><i class="ml-[17px] block border-x-4 border-t-[5px] border-x-transparent border-t-[#333]"></i></div>
    <div class="flex h-[38px] shrink-0 items-center pl-[10px]"><svg class="h-7 w-7 shrink-0" viewBox="0 0 28 28"><path d="M1 26C2-4 13-6 14 12S22 38 27 3" fill="none" stroke="url(#gs)" stroke-width="2"/></svg><i class="ml-[17px] block border-x-4 border-t-[5px] border-x-transparent border-t-[#333]"></i></div>
    <div class="flex h-[38px] shrink-0 items-center pl-[10px]"><svg class="h-7 w-7 shrink-0" viewBox="0 0 28 28"><ellipse cx="14" cy="14" rx="15" ry="11" transform="rotate(-45 14 14)" fill="none" stroke="url(#gs)" stroke-width="2"/><path d="M12 12H15V15H12Z" fill="#fff" stroke="#222"/></svg><i class="ml-[17px] block border-x-4 border-t-[5px] border-x-transparent border-t-[#333]"></i></div>
    <div class="flex h-[38px] shrink-0 items-center pl-[10px]"><svg class="h-7 w-7 shrink-0" viewBox="0 0 28 28"><path d="M0 1H13Q27 1 27 16V28" fill="none" stroke="#c4c4c4" stroke-width="2"/><path d="M12 13 16 17M16 13 12 17" stroke="#ddd"/></svg><i class="ml-[17px] block border-x-4 border-t-[5px] border-x-transparent border-t-[#888]"></i></div>
    <div class="flex h-[38px] shrink-0 items-center pl-[10px]"><svg class="h-7 w-7 shrink-0" viewBox="0 0 28 28"><path d="M1 2H27V25H1Z" fill="#f4f4f4" stroke="#bbb" stroke-width="1.500"/><path d="M4 5H24V22H4Z" fill="#eee" stroke="#bbb"/><path d="M4 16 9 11 14 15 19 13 24 17V22H17Z" fill="#ccc"/><circle cx="20" cy="8" r="2" fill="none" stroke="#bbb"/></svg></div>
    <div class="flex h-[38px] shrink-0 items-center pl-[10px]"><svg class="h-7 w-7 shrink-0" viewBox="0 0 28 28"><path d="M1 14 8 2H21L27 14 21 26H8Z" fill="none" stroke="url(#gs)" stroke-width="2"/><path d="M12 12H15V15H12Z" fill="#fff" stroke="#222"/></svg></div>
    <div class="flex h-[38px] shrink-0 items-center pl-[21px]"><div class="h-[7px] w-[7px] border border-[#222] bg-white"></div></div>
    <div class="flex h-[38px] shrink-0 items-center pl-[10px]"><svg class="h-7 w-7 shrink-0" viewBox="0 0 28 28"><path d="M6 7 23 2V19L6 25Z" fill="#e8e8e8" stroke="#222" stroke-width="1.400" stroke-dasharray="4 2"/><path d="M15 0V28M6 16 23 10" stroke="#777" stroke-dasharray="4 2"/></svg></div>
    <div class="flex h-[38px] shrink-0 items-center pl-[10px]"><svg class="h-7 w-7 shrink-0" viewBox="0 0 28 28"><path d="M0 25.500H3L12 1H16L25 25.500H28V27H16.500V25.500H20L18 19H9.500L7.500 25.500H11V27H0ZM10.500 16H17L13.500 7Z" fill="#f2f8fb" stroke="#2a7099" stroke-width="1.200"/></svg></div>
    <div class="mt-[2px] ml-[7px] h-px shrink-0 bg-[#888]"></div>
    <div class="flex h-[38px] shrink-0 items-center pl-[10px]"><svg class="h-7 w-7 shrink-0" viewBox="0 0 28 28"><circle cx="6" cy="6" r="4.500" fill="none" stroke="#c4c4c4" stroke-width="3"/><circle cx="6" cy="22" r="4" fill="none" stroke="#c4c4c4" stroke-width="3"/><path d="M10 8 27 21M10 20 27 7M26 2V26" stroke="#c4c4c4" stroke-width="2.500"/></svg><i class="ml-[17px] block border-x-4 border-t-[5px] border-x-transparent border-t-[#888]"></i></div>
    <div class="flex h-[38px] shrink-0 items-center pl-[10px]"><svg class="h-7 w-7 shrink-0"><use href="#cube"/></svg><i class="ml-[17px] block border-x-4 border-t-[5px] border-x-transparent border-t-[#333]"></i></div>
    <div class="flex h-[38px] shrink-0 items-center pl-[10px]"><svg class="h-7 w-7 shrink-0" viewBox="0 0 28 28"><path d="M26 3H4V25H26M26 9H11V19H26" fill="none" stroke="#bbb" stroke-width="2"/></svg></div>
  </aside>
</main>

<!-- model tabs -->
<div class="flex h-[25px] shrink-0 text-[19px] leading-[24px] font-light text-[#333]">
  <div class="h-[24px] w-[27px] border-l-2 border-[#9db9c0] bg-white"></div>
  <div class="flex h-[24px] w-[96px] border-t border-black">
    <div class="grid w-6 place-items-center border border-[#77779a] bg-[#a5a5bd]"><svg class="h-3 w-3" viewBox="0 0 12 12"><path d="M2 0V12" stroke="#778" stroke-width="1.500"/><path d="M11 0V12L4 6Z" fill="#778"/></svg></div>
    <div class="grid w-6 place-items-center border border-[#77779a] bg-[#a5a5bd]"><svg class="h-3 w-3" viewBox="0 0 12 12"><path d="M9 0V12L2 6Z" fill="#778"/></svg></div>
    <div class="grid w-6 place-items-center border border-[#77779a] bg-[#a5a5bd]"><svg class="h-3 w-3" viewBox="0 0 12 12"><path d="M3 0V12L10 6Z" fill="#778"/></svg></div>
    <div class="grid w-6 place-items-center border border-[#77779a] bg-[#a5a5bd]"><svg class="h-3 w-3" viewBox="0 0 12 12"><path d="M10 0V12" stroke="#778" stroke-width="1.500"/><path d="M1 0V12L8 6Z" fill="#778"/></svg></div>
  </div>
  <span class="w-[72px] border-l border-b border-[#808080] pl-[19px]">模型</span>
  <span class="w-[90px] border-x border-b border-[#808080] bg-[#d3d3d3] pl-[9px]">3D 視圖</span>
  <span class="w-[127px] border-r border-b border-[#808080] bg-[#d3d3d3] pl-[11px] tracking-[0.200px]">動作研究 1</span>
  <div class="w-[1508px]"></div>
</div>

<!-- line format toolbar -->
<div class="flex h-[46px] shrink-0 items-start border-b border-[#7f7f7f] pt-[2px]">
  <div class="mt-[3px] ml-[3px] h-[38px] border-l-2 border-dotted border-[#888]"></div>
  <div class="flex h-[43px] w-[290px] items-center border-r border-[#808080]">
    <svg class="ml-[15px] h-7 w-7" viewBox="0 0 28 28"><path d="M1 8 16 2 26 8 11 15ZM1 8V19L11 25 26 17V8M1 13 11 19 26 12" fill="#e6e6e6" stroke="#bdbdbd" stroke-width="1.300"/><path d="M14 26 23 15 27 18 18 27Z" fill="#ddd" stroke="#aaa"/></svg>
    <svg class="ml-[11px] h-7 w-7" viewBox="0 0 28 28"><path d="M1 8 16 2 26 8 11 15ZM1 8V18L11 25 26 17V8M1 13 11 19 26 12" fill="#e6e6e6" stroke="#bdbdbd" stroke-width="1.300"/></svg>
    <svg class="ml-[12px] h-[29px] w-[25px]" viewBox="0 0 25 29"><path d="M24 0 12 17 8 14Z" fill="#ddd" stroke="#aaa"/><path d="M7 15 12 18Q9 24 1 23 6 20 7 15Z" fill="#aaa"/><path d="M0 25H25V29H0Z" fill="#ccc"/></svg>
    <svg class="ml-[12px] h-7 w-7" viewBox="0 0 28 28"><path d="M0 5H28" stroke="#b5b5b5"/><path d="M0 10H28" stroke="#b5b5b5" stroke-width="2"/><path d="M0 17H28" stroke="#b5b5b5" stroke-width="2.500"/><path d="M0 24H28" stroke="#b5b5b5" stroke-width="3"/></svg>
    <svg class="ml-[11px] h-7 w-7" viewBox="0 0 28 28"><path d="M0 4H28" stroke="#b5b5b5" stroke-width="2"/><path d="M0 10H28" stroke="#b5b5b5" stroke-width="2" stroke-dasharray="10 2 2 2"/><path d="M0 15H28" stroke="#b5b5b5" stroke-width="2" stroke-dasharray="2 2"/><path d="M0 20H28" stroke="#b5b5b5" stroke-width="2" stroke-dasharray="6 2 2 2"/><path d="M0 25H28" stroke="#b5b5b5" stroke-width="2" stroke-dasharray="3 2"/></svg>
    <svg class="ml-[11px] h-7 w-7" viewBox="0 0 28 28"><path d="M1 0V26" stroke="#aaa" stroke-width="1.500"/><path d="M25 0V16" stroke="#ddd" stroke-width="1.500"/><path d="M5 6H18M8 14H21" stroke="#b5b5b5" stroke-width="2"/><path d="M17 2 23 6 17 10ZM10 10 4 14 10 18Z" fill="#aaa"/><ellipse cx="21" cy="23" rx="6" ry="3.500" fill="#eee" stroke="#bbb"/><circle cx="21" cy="23" r="2.500" fill="#aaa"/></svg>
    <svg class="ml-[12px] h-[29px] w-[25px]" viewBox="0 0 25 29"><path d="M1 0V21H25" fill="none" stroke="#111" stroke-width="2.200"/><path d="M2 10H11V20" fill="none" stroke="#2a7ba3" stroke-width="2"/><path d="M0 25H4V29H0Z" fill="#f00"/><path d="M4 25H8V29H4Z" fill="#f80"/><path d="M8 25H12V29H8Z" fill="#fc0"/><path d="M12 25H16V29H12Z" fill="#6b4"/><path d="M16 25H20V29H16Z" fill="#18a"/><path d="M20 25H25V29H20Z" fill="#61d"/></svg>
  </div>
</div>
<div class="flex h-[26px] shrink-0 items-center pl-px leading-[26px] text-[#444]"><span class="w-[1543px] text-[18px] tracking-[0.200px]">SOLIDWORKS Premium 2016 x64 Edition</span><span class="w-[150px] border-x border-[#ccc] pl-3">正在編輯：零件</span><span class="pl-8">MMGS</span></div>

<!-- taskbar -->
<footer class="flex h-[60px] shrink-0 items-center bg-[linear-gradient(90deg,#40cfe4_0,#40cfe4_510px,#34b6ca_600px,#34b6ca_900px,#38bccf_1260px,#38bccf_1350px,#40cde1_1450px,#40cfe4_100%)] text-white">
  <div class="grid w-[72px] place-items-center"><svg class="h-6 w-6" viewBox="0 0 24 24"><path d="M0 3 11 1.500V11.500H0ZM12 1.300 24 0V11.500H12ZM0 12.500H11V22.500L0 21ZM12 12.500H24V24L12 22.700Z" fill="#fff"/></svg></div>
  <div class="grid w-[72px] place-items-center"><svg class="h-6 w-6" viewBox="0 0 24 24"><circle cx="15" cy="9" r="8" fill="none" stroke="#fff" stroke-width="1.400"/><path d="M9 15 1 24" stroke="#fff" stroke-width="1.400"/></svg></div>
  <div class="ml-[2px] grid w-[78px] place-items-center"><svg class="h-[34px] w-[34px]"><use href="#chrome"/></svg></div>
  <div class="flex h-[60px] w-[73px] flex-col items-center"><svg class="mt-[16px] h-[28px] w-[32px]" viewBox="0 0 32 28"><path d="M0 3Q0 1 2 1H13L15 4H32V26H0Z" fill="#e5a50a"/><path d="M0 7H16L19 3H32V26H0Z" fill="#fbd560"/><path d="M5 28V17Q5 15 7 15H25Q27 15 27 17V28H21V21H11V28Z" fill="#3b8ad0"/></svg><div class="mt-auto flex w-[60px]"><div class="h-[3px] w-[47px] bg-[#b4f6ff]"></div><div class="h-[3px] w-[13px] bg-[#7dc2cc]"></div></div></div>
  <div class="grid w-[75px] place-items-center"><svg class="h-[34px] w-[36px]" viewBox="0 0 36 34"><circle cx="20" cy="17" r="16" fill="#ed6c47"/><path d="M20 1A16 16 0 0 1 36 17H20Z" fill="#ff8f6b"/><path d="M36 17A16 16 0 0 1 6 24L20 17Z" fill="#d35230"/><rect y="7" width="18" height="19" rx="2" fill="#c43e1c"/><text x="9" y="21.500" text-anchor="middle" font-family="'Open Sans'" font-weight="700" font-size="13" fill="#fff">P</text></svg></div>
  <div class="grid w-[75px] place-items-center"><svg class="h-[34px] w-[36px]" viewBox="0 0 36 34"><path d="M8 1H36V9H8Z" fill="#41a5ee"/><path d="M8 9H36V17H8Z" fill="#2b7cd3"/><path d="M8 17H36V25H8Z" fill="#185abd"/><path d="M8 25H36V33H8Z" fill="#103f91"/><rect y="7" width="18" height="19" rx="2" fill="#185abd"/><text x="9" y="21.500" text-anchor="middle" font-family="'Open Sans'" font-weight="700" font-size="13" fill="#fff">W</text></svg></div>
  <div class="grid w-[75px] place-items-center"><svg class="h-[34px] w-[36px]" viewBox="0 0 36 34"><path d="M8 1H22V9H8Z" fill="#21a366"/><path d="M22 1H36V9H22Z" fill="#33c481"/><path d="M8 9H36V17H8Z" fill="#107c41"/><path d="M22 9H36V17H22Z" fill="#21a366"/><path d="M8 17H36V33H8Z" fill="#185c37"/><path d="M22 17H36V25H22Z" fill="#107c41"/><rect y="7" width="18" height="19" rx="2" fill="#107c41"/><text x="9" y="21.500" text-anchor="middle" font-family="'Open Sans'" font-weight="700" font-size="13" fill="#fff">X</text></svg></div>
  <div class="grid w-[77px] place-items-center"><svg class="h-[34px] w-[36px]" viewBox="0 0 36 34"><path d="M2 20Q3 5 19 5Q33 7 32 18Q31 27 24 26Q19 26 19 31Q8 34 4 29Q8 25 2 20Z" fill="#dfe8f0" stroke="#a3b6c9"/><circle cx="7" cy="19" r="2.500" fill="#e03b30"/><circle cx="12" cy="13" r="3" fill="#6cba3c"/><circle cx="19" cy="11" r="3" fill="#f3a71c"/><circle cx="16" cy="21" r="2.500" fill="#40b7cf"/><path d="M18 34 30 8" stroke="#e08428" stroke-width="3"/><path d="M27 1 36 3 31 9 28 8Z" fill="#cf9a60"/></svg></div>
  <div class="flex h-[60px] w-[68px] flex-col items-center border-r-2 border-[#26869a] bg-[#3ad0e6]"><svg class="mt-[12px] ml-[4px] h-[36px] w-[37px]" viewBox="0 0 37 36"><path d="M1 5 18 0 36 5V28L18 35 1 28Z" fill="#a80d12" stroke="#400"/><path d="M1 5 18 0 36 5 18 10Z" fill="#e82329"/><path d="M18 10 36 5V28L18 35Z" fill="#6e0a0d"/><path d="M14 12Q6 9 6 14Q6 17 10 18 14 19 13 22 11 25 5 21" fill="none" stroke="#fff" stroke-width="3.200"/><path d="M20 12 22 24 27 14 29 23 34 10" fill="none" stroke="#fff" stroke-width="2.800"/><text x="26" y="35" text-anchor="middle" font-family="'Open Sans'" font-weight="800" font-size="9" fill="#fff" stroke="#222" stroke-width="1.800" paint-order="stroke">2016</text></svg><div class="mt-auto h-[3px] w-[68px] bg-[#b4f6ff]"></div></div>
  <div class="h-[60px] w-[5px] bg-[#2fa3b6]"></div>
  <div class="ml-[8px] flex h-[60px] w-[61px] flex-col items-center"><svg class="mt-[13px] ml-[4px] h-[38px] w-[38px]" viewBox="0 0 38 38"><use href="#chrome" width="34" height="34"/><circle cx="26" cy="26" r="11.500" fill="#a9abb0"/><path d="M21 33 26 18 32 33" fill="none" stroke="#7a6a6e" stroke-width="2.500"/><path d="M18 22Q26 18 34 24M20 29H32" fill="none" stroke="#d8d4cf" stroke-width="2"/></svg><div class="mt-auto h-[3px] w-[61px] bg-[#b4f6ff]"></div></div>
  <div class="ml-[14px] flex h-[60px] w-[61px] flex-col items-center"><svg class="mt-[16px] mr-[2px] h-[28px] w-[33px]" viewBox="0 0 33 28"><path d="M0 0H33V28H0Z" fill="#c4c4c4"/><path d="M1.500 3H31.500V26.500H1.500Z" fill="#000"/><path d="M2 4H31V11Q10 11 4 20L2 22Z" fill="#333"/><text x="3" y="11" font-family="'Liberation Mono'" font-size="7" fill="#ddd">C:\_</text></svg><div class="mt-auto flex"><div class="h-[3px] w-[47px] bg-[#b4f6ff]"></div><div class="h-[3px] w-[14px] bg-[#7dc2cc]"></div></div></div>
  <div class="ml-[14px] flex h-[60px] w-[61px] flex-col items-center"><svg class="mt-[12px] mr-[2px] h-[36px] w-[36px]" viewBox="0 0 36 36"><circle cx="18" cy="18" r="17.500" fill="#333"/><g fill="none" stroke="#ccc" stroke-width="1.100"><path d="M8 5Q16 17 34 18M5 8Q14 21 34 22M3 12Q13 25 33 26M2 16Q12 29 30 29M1 20Q11 32 27 32M12 3Q19 13 34 14M16 2Q22 9 32 10M2 25Q9 33 21 34"/></g></svg><div class="mt-auto flex"><div class="h-[3px] w-[47px] bg-[#b4f6ff]"></div><div class="h-[3px] w-[14px] bg-[#7dc2cc]"></div></div></div>
  <div class="ml-[14px] flex h-[60px] w-[61px] flex-col items-center"><svg class="mt-[13px] mr-[2px] h-[34px] w-[34px]" viewBox="-17 -17 34 34"><path d="M-1-17Q17-17 17 0Q17 12 6 13Q12 5 7-4Q5-8-3-8Z" fill="#17a53a"/><path d="M17 0Q17 17 2 17Q-9 15-9 5Q-2 11 5 7Q8 4 8-4L12-10Z" fill="#f5b90b"/><path d="M2 17Q-17 17-17 1Q-16-9-5-9Q-11-2-6 4Q-2 8 3 8Z" fill="#e92d23"/><path d="M-17 0Q-17-17 0-17Q9-16 9-5Q3-10-4-8Q-8-7-9-5Q-14-5-17 0Z" fill="#2f72ea"/><circle r="6" fill="#38bccf"/></svg><div class="mt-auto h-[3px] w-[61px] bg-[#b4f6ff]"></div></div>
  <div class="ml-[14px] flex h-[60px] w-[61px] flex-col items-center"><svg class="mt-[13px] mr-[2px] h-[34px] w-[34px]" viewBox="0 0 34 34"><circle cx="17" cy="17" r="16.500" fill="#fff" stroke="#c33"/><circle cx="20" cy="8" r="2.500" fill="#e0201b"/><path d="M2 10 15 15 28 4M21 8Q22 14 18 17L17 33" fill="none" stroke="#e0201b" stroke-width="2.200"/><path d="M10 17Q16 12 22 17L17 21Q14 16 10 17Z" fill="#e0201b"/></svg><div class="mt-auto h-[3px] w-[61px] bg-[#b4f6ff]"></div></div>
  <svg class="ml-[310px] h-[30px] w-[31px]" viewBox="0 0 31 30"><circle cx="14" cy="14" r="13.500" fill="#ffb92e"/><path d="M7 29Q0 28 1 22Q2 17 7 17Q9 10 16 10Q22 11 23 16Q30 16 30 23Q29 29 24 29Z" fill="#dcefff"/></svg>
  <span class="ml-[15px] w-[59px] text-[20.500px] tracking-[-0.200px]">23°C</span><span class="w-[110px] text-[20.800px] font-light whitespace-nowrap">多雲時晴</span>
  <svg class="h-[11px] w-[18px]" viewBox="0 0 18 11"><path d="M1 10 9 2 17 10" fill="none" stroke="#fff" stroke-width="1.500"/></svg>
  <svg class="ml-[15px] h-[20px] w-[25px]" viewBox="0 0 25 20"><path d="M8 2H24V15H4V9M1 2H7V8H1ZM8 18.500H19M13 15V19" fill="none" stroke="#fff" stroke-width="1.400"/></svg>
  <svg class="ml-[11px] h-[20px] w-[25px]" viewBox="0 0 25 20"><path d="M2 1V5M6 1V5M0 5H8V8L5 11H3L0 8ZM4 11V16H22V5H10" fill="none" stroke="#fff" stroke-width="1.400"/><path d="M10 7H20V14H7Z" fill="#fff"/><path d="M23 8V13" stroke="#fff" stroke-width="2"/></svg>
  <svg class="ml-[12px] h-[20px] w-[23px]" viewBox="0 0 23 20"><path d="M1 7H4L9 2V18L4 13H1ZM12 7Q14 10 12 13M15 5Q18 10 15 15M18 3Q23 10 18 17" fill="none" stroke="#fff" stroke-width="1.400"/></svg>
  <span class="ml-[12px] text-[21px] leading-none font-medium">英</span>
  <div class="ml-[14px] w-[86px] text-center text-[18px] leading-[26px] tracking-[-0.200px] whitespace-nowrap">下午 12:51<br>2022/1/3</div>
  <svg class="ml-[27px] h-[38px] w-[38px]" viewBox="0 0 38 38"><path d="M0 2H24V21H14L10 27V21H0Z" fill="#fff"/><path d="M5 8H19M5 12H19M5 16H15" stroke="#3dcde2" stroke-width="1.300"/><circle cx="24" cy="25" r="12" fill="#2cc9e3" stroke="#8ceaf7"/><text x="24" y="30.500" text-anchor="middle" font-family="'Open Sans'" font-weight="600" font-size="16" fill="#fff">2</text></svg>
  <div class="ml-auto h-[60px] w-[6px] border-l border-[#9be9f3]"></div>
</footer>
</div>

<!-- window preview -->
<div id="preview" class="absolute top-[788px] left-[1513px] z-20 h-[227px] w-[402px] overflow-hidden border border-[#222] bg-white"></div>
</div>
<script>
  const preview = document.getElementById('preview');
  const copy = document.getElementById('screen').cloneNode(true);
  copy.removeAttribute('id');
  copy.classList.add('origin-top-left', 'scale-[.20833]');
  copy.querySelector('[data-slot]').remove();
  copy.querySelector('[data-tri]').classList.remove('hidden');
  copy.querySelector('[data-cursor]').setAttribute('transform', 'translate(275 188)');
  copy.querySelector('[data-title]').textContent = '2.SLDPRT';
  copy.querySelector('[data-root]').textContent = '2  (預設<<預設>_顯示狀態 1>)';
  preview.append(copy);
</script>
</body>
</html>
